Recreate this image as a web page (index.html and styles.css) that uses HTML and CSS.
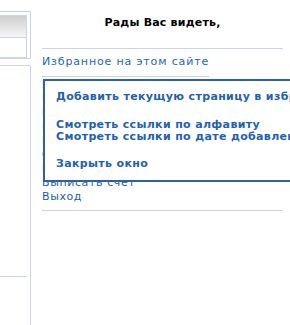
FILE: index.html
```html
<!DOCTYPE html>
<html lang="ru">
<head>
<meta charset="utf-8">
<title>Избранное</title>
<link rel="stylesheet" href="styles.css">
</head>
<body>
<div class="page">
  <aside class="side">
    <div class="box1">
      <div class="inner">
        <div class="grad"></div>
        <div class="row"></div>
      </div>
    </div>
    <div class="box2">
      <div class="sep"></div>
    </div>
  </aside>
  <main class="content">
    <div class="greet">Рады Вас видеть,</div>
    <div class="fav"><a href="#" class="fav-link">Избранное на этом сайте</a></div>
    <ul class="menu">
      <li><a href="#">Мой профиль</a></li>
      <li><a href="#">Мои заказы</a></li>
      <li><a href="#">Корзина</a></li>
      <li><a href="#">Мои адреса</a></li>
      <li><a href="#">Подписка</a></li>
      <li><a href="#">Сменить пароль</a></li>
      <li><a href="#">История</a></li>
      <li><a href="#">Выписать счет</a></li>
      <li><a href="#">Выход</a></li>
    </ul>
    <div class="rule"></div>
  </main>
</div>
<div class="popup">
  <a href="#" class="pop-item">Добавить текущую страницу в избранное</a>
  <div class="pop-group">
    <a href="#" class="pop-item">Смотреть ссылки по алфавиту</a>
    <a href="#" class="pop-item">Смотреть ссылки по дате добавления</a>
  </div>
  <a href="#" class="pop-item pop-close">Закрыть окно</a>
</div>
</body>
</html>
```
FILE: styles.css
```css
html, body {
  margin: 0;
  padding: 0;
  background: #fff;
  overflow: hidden;
}
body {
  font-family: "DejaVu Sans", Verdana, sans-serif;
  font-size: 11px;
  line-height: 14px;
}
a {
  text-decoration: none;
}
.page {
  display: flex;
  height: 325px;
}
.side {
  width: 31px;
  flex: none;
  display: flex;
  flex-direction: column;
}
.box1 {
  margin-top: 11px;
  height: 46px;
  border: 1px solid #cdd4ea;
  border-left: none;
}
.inner {
  margin: 3px 3px 0 0;
  border: 1px solid #cdd4ea;
  border-left: none;
}
.grad {
  height: 21px;
  border-bottom: 1px solid #cdd4ea;
  background: linear-gradient(#cfcfcf, #f6f6f6);
}
.row {
  height: 19px;
}
.box2 {
  margin-top: 6px;
  flex: 1;
  border-top: 1px solid #cdd4ea;
  border-right: 1px solid #cdd4ea;
}
.sep {
  margin: 210px 3px 0 0;
  border-top: 1px solid #cdd4ea;
}
.content {
  margin-left: 11px;
  width: 241px;
}
.greet {
  padding: 16px 0 18px;
  font-weight: bold;
  color: #000;
  text-align: center;
  letter-spacing: 0.2px;
  border-bottom: 1px solid #cdd4ea;
}
.fav {
  margin-top: 6px;
}
.fav-link {
  display: inline-block;
  padding-bottom: 7px;
  color: #2266bb;
  letter-spacing: 0.85px;
  border-bottom: 1px solid #cdd4ea;
}
.menu {
  list-style: none;
  margin: 0;
  padding: 1px 0 0;
}
.menu a {
  color: #1a5ea6;
  letter-spacing: 0.6px;
}
.rule {
  margin-top: 6px;
  border-top: 1px solid #cdd4ea;
}
.popup {
  position: absolute;
  left: 43px;
  top: 79px;
  width: 300px;
  height: 89px;
  padding: 10px 0 0 11px;
  background: #fff;
  border: 2px solid #2d60a8;
  display: flex;
  flex-direction: column;
  white-space: nowrap;
}
.pop-item {
  display: block;
  font-weight: bold;
  line-height: 12px;
  color: #2361b0;
  letter-spacing: 0.35px;
}
.pop-group {
  margin: 16px 0 15px;
}
```
